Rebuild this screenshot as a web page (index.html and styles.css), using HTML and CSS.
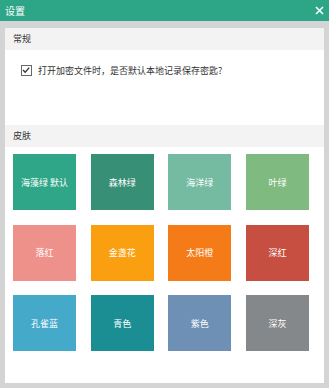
FILE: index.html
```html
<!DOCTYPE html>
<html lang="zh-CN">
<head>
    <meta charset="UTF-8">
    <title>设置</title>
    <link rel="stylesheet" href="styles.css">
</head>
<body>

    <div class="titlebar">
        <span class="title">设置</span>
        <svg class="close" width="9" height="9" viewBox="0 0 9 9">
            <path d="M1 1 L8 8 M8 1 L1 8" stroke="#fff" stroke-width="1.6" fill="none"/>
        </svg>
    </div>

    <div class="frame">
        <div class="panel">
            <div class="section-head">常规</div>
            <div class="section-body">
                <label class="check">
                    <span class="box">
                        <svg width="10" height="10" viewBox="0 0 10 10">
                            <path d="M2 5 L4.2 7.2 L8.2 2.6" stroke="#333" stroke-width="1.3" fill="none"/>
                        </svg>
                    </span>
                    打开加密文件时，是否默认本地记录保存密匙?
                </label>
            </div>

            <div class="section-head">皮肤</div>
            <div class="skins">
                <div class="skin seaweed">海藻绿 默认</div>
                <div class="skin forest">森林绿</div>
                <div class="skin ocean">海洋绿</div>
                <div class="skin leaf">叶绿</div>
                <div class="skin fallen">落红</div>
                <div class="skin marigold">金盏花</div>
                <div class="skin sun">太阳橙</div>
                <div class="skin crimson">深红</div>
                <div class="skin peacock">孔雀蓝</div>
                <div class="skin cyan">青色</div>
                <div class="skin purple">紫色</div>
                <div class="skin gray">深灰</div>
            </div>
        </div>
    </div>

</body>
</html>
```

FILE: styles.css
```css
body {
    margin: 0;
    font-family: "Noto Sans CJK SC", "Noto Sans", sans-serif;
    font-size: 9px;
    color: #333;
    background: #d4d4d4;
    height: 388px;
    display: flex;
    flex-direction: column;
}

.titlebar {
    height: 21px;
    background: #2ca687;
    color: white;
    display: flex;
    align-items: center;
    justify-content: space-between;
    padding: 0 5px 0 5px;
}

.title {
    font-size: 10px;
}

.frame {
    flex: 1;
    padding: 7px 5px 5px 5px;
    display: flex;
}

.panel {
    flex: 1;
    background: white;
}

.section-head {
    height: 22px;
    line-height: 22px;
    background: #f3f3f3;
    padding-left: 8px;
}

.section-body {
    height: 75px;
    padding: 14px 0 0 16px;
    box-sizing: border-box;
}

.check {
    display: flex;
    align-items: center;
    gap: 6px;
}

.box {
    width: 9px;
    height: 9px;
    border: 1px solid #666;
    display: flex;
}

.box svg {
    margin: -1px 0 0 -1px;
}

.skins {
    display: grid;
    grid-template-columns: repeat(4, 63px);
    grid-auto-rows: 56px;
    column-gap: 14.67px;
    row-gap: 14.5px;
    padding: 7px 0 0 8px;
}

.skin {
    display: flex;
    align-items: center;
    justify-content: center;
    color: white;
    font-size: 9px;
}

.seaweed { background: #2ea687; }
.forest { background: #378f75; }
.ocean { background: #74bba2; }
.leaf { background: #7fbb81; }
.fallen { background: #ee918a; }
.marigold { background: #f99f10; }
.sun { background: #f47b17; }
.crimson { background: #c64f41; }
.peacock { background: #45a9c9; }
.cyan { background: #1a8e93; }
.purple { background: #6e90b4; }
.gray { background: #85888a; }
```
